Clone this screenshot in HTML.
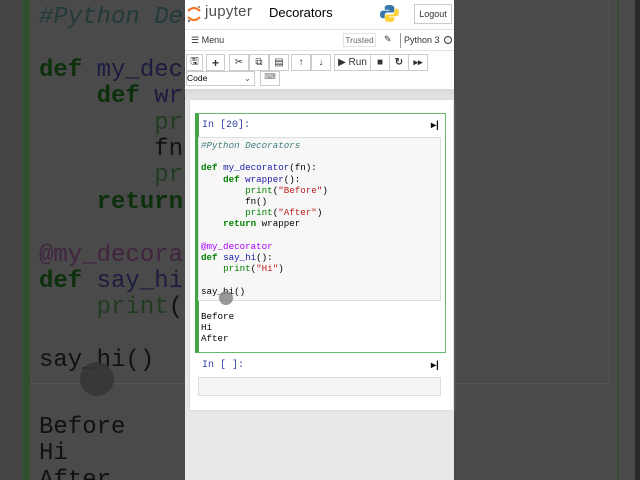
<!DOCTYPE html>
<html style="width:640px;height:480px;overflow:hidden"><head><meta charset="utf-8"><style>
*{margin:0;padding:0;box-sizing:border-box}
body{width:640px;height:480px;overflow:hidden;background:#4a4a4a;position:relative;font-family:"Liberation Sans",sans-serif}
.abs{position:absolute}
.bg{font-family:"Liberation Mono",monospace;font-size:24px;line-height:26.4px;color:#111;white-space:pre;left:39px;overflow:hidden}
.mono{font-family:"Liberation Mono",monospace;white-space:pre}
.bg .k{color:#0c300c;font-weight:bold}
.bg .f{color:#1c1c40}
.bg .c{color:#223a3a;font-style:italic}
.bg .b{color:#223c22}
.bg .d{color:#402440}
.bg .s{color:#401616}
.code{font-size:9.2px;line-height:11.2px;color:#000}
.code .k{color:#008000;font-weight:bold}
.code .f{color:#1a1aa6}
.code .c{color:#408080;font-style:italic}
.code .b{color:#008000}
.code .d{color:#a0f}
.code .s{color:#ba2121}
.btn{position:absolute;top:54px;height:17px;border:1px solid #ccc;background:#fff;font-size:10px;color:#333;display:flex;align-items:center;justify-content:center}
</style></head><body>
<div class="abs" style="left:0;top:0;width:22px;height:480px;background:#444"></div>
<div class="abs" style="left:22px;top:0;width:8px;height:480px;background:#2f4f2f"></div>
<div class="abs" style="left:30px;top:0;width:580px;height:384px;border-bottom:1px solid #555;border-right:1px solid #555"></div>
<div class="abs" style="left:617px;top:0;width:2px;height:480px;background:#3a4a3a"></div>
<div class="abs" style="left:635px;top:0;width:5px;height:480px;background:#2a2a2a"></div>
<div class="abs bg" style="top:5px;height:372px"><span class="c">#Python Decorators</span>

<span class="k">def</span> <span class="f">my_decorator</span>(fn):
    <span class="k">def</span> <span class="f">wrapper</span>():
        <span class="b">print</span>(<span class="s">"Before"</span>)
        fn()
        <span class="b">print</span>(<span class="s">"After"</span>)
    <span class="k">return</span> wrapper

<span class="d">@my_decorator</span>
<span class="k">def</span> <span class="f">say_hi</span>():
    <span class="b">print</span>(<span class="s">"Hi"</span>)

say_hi()</div>
<div class="abs bg" style="top:415px;height:65px">Before
Hi
After</div>
<div class="abs" style="left:80px;top:362px;width:34px;height:34px;border-radius:50%;background:#333;opacity:.8"></div>

<!-- center panel -->
<div class="abs" style="left:185px;top:0;width:269px;height:480px;background:#e8e8e8"></div>
<div class="abs" style="left:185px;top:0;width:269px;height:89px;background:#fff"></div>
<div class="abs" style="left:185px;top:29px;width:269px;height:1px;background:#e4e4e4"></div>
<div class="abs" style="left:185px;top:50px;width:269px;height:1px;background:#e4e4e4"></div>
<div class="abs" style="left:185px;top:89px;width:269px;height:11px;background:linear-gradient(#d8d8d8,#e6e6e6)"></div>
<div class="abs" style="left:190px;top:100px;width:263px;height:310px;background:#fff;box-shadow:0 0 3px #ccc"></div>

<!-- header -->
<svg class="abs" style="left:186px;top:4px" width="16" height="20" viewBox="0 0 16 20"><path d="M2 7 Q8 1 14 7" stroke="#f37726" stroke-width="2.2" fill="none"/><path d="M2 13 Q8 19 14 13" stroke="#f37726" stroke-width="2.2" fill="none"/><circle cx="13" cy="3" r="1" fill="#767677"/><circle cx="3" cy="17" r="1.2" fill="#767677"/></svg>
<div class="abs" style="left:205px;top:3px;font-size:15px;color:#4e4e4e;letter-spacing:.3px">jupyter</div>
<div class="abs" style="left:269px;top:5px;font-size:13px;color:#000">Decorators</div>
<svg class="abs" style="left:380px;top:4px" width="19" height="19" viewBox="0 0 20 20"><path d="M10 1C5 1 5 3 5 4v2h5v1H3C1 7 0 9 0 11s1 4 3 4h2v-3c0-2 1-3 3-3h5c2 0 2-1 2-2V4c0-2-2-3-5-3z" fill="#3776ab"/><path d="M10 19c5 0 5-2 5-3v-2h-5v-1h7c2 0 3-2 3-4s-1-4-3-4h-2v3c0 2-1 3-3 3H7c-2 0-2 1-2 2v3c0 2 2 3 5 3z" fill="#ffd43b"/></svg>
<div class="abs" style="left:414px;top:4px;width:38px;height:20px;border:1px solid #ccc;font-size:9px;display:flex;align-items:center;justify-content:center;color:#333">Logout</div>

<!-- menu -->
<div class="abs" style="left:191px;top:35px;font-size:9px;color:#333">☰ Menu</div>
<div class="abs" style="left:343px;top:33px;width:33px;height:14px;border:1px solid #e4e4e4;font-size:8.5px;color:#666;display:flex;align-items:center;justify-content:center">Trusted</div>
<div class="abs" style="left:384px;top:34px;font-size:9px;color:#333">✎</div>
<div class="abs" style="left:400px;top:33px;width:1px;height:15px;background:#999"></div>
<div class="abs" style="left:404px;top:35px;font-size:9px;color:#333">Python 3</div>
<div class="abs" style="left:444px;top:36px;width:8px;height:8px;border:1px solid #333;border-radius:50%"></div>

<!-- toolbar -->
<div class="btn" style="left:186px;width:17px">🖫</div>
<div class="btn" style="left:206px;width:19px;font-weight:bold;font-size:12px">+</div>
<div class="btn" style="left:229px;width:20px">✂</div>
<div class="btn" style="left:249px;width:20px">⧉</div>
<div class="btn" style="left:269px;width:20px">▤</div>
<div class="btn" style="left:291px;width:20px;font-weight:bold">↑</div>
<div class="btn" style="left:311px;width:20px;font-weight:bold">↓</div>
<div class="btn" style="left:334px;width:37px">▶ Run</div>
<div class="btn" style="left:370px;width:20px">■</div>
<div class="btn" style="left:389px;width:20px;font-weight:bold">↻</div>
<div class="btn" style="left:408px;width:20px;font-size:9px;font-weight:bold">▸▸</div>
<div class="abs" style="left:186px;top:71px;width:69px;height:15px;border:1px solid #ccc;font-size:8.5px;color:#000;padding:1px 0 0 0">Code<span style="position:absolute;right:3px;top:1px;color:#555">⌄</span></div>
<div class="abs" style="left:260px;top:71px;width:20px;height:15px;border:1px solid #ccc;font-size:8px;color:#777;text-align:center">⌨</div>

<!-- cell 1 -->
<div class="abs" style="left:195px;top:113px;width:251px;height:240px;border:1px solid #66bb6a;border-left:4px solid #42a548"></div>
<div class="abs mono" style="left:202px;top:120px;font-size:10px;color:#303f9f">In [20]:</div>
<div class="abs" style="left:431px;top:120px;font-size:10px;font-weight:bold;color:#111">▸|</div>
<div class="abs" style="left:198px;top:137px;width:243px;height:164px;background:#f7f7f7;border:1px solid #ddd"></div>
<div class="abs mono code" style="left:201px;top:140px"><span class="c">#Python Decorators</span>

<span class="k">def</span> <span class="f">my_decorator</span>(fn):
    <span class="k">def</span> <span class="f">wrapper</span>():
        <span class="b">print</span>(<span class="s">"Before"</span>)
        fn()
        <span class="b">print</span>(<span class="s">"After"</span>)
    <span class="k">return</span> wrapper

<span class="d">@my_decorator</span>
<span class="k">def</span> <span class="f">say_hi</span>():
    <span class="b">print</span>(<span class="s">"Hi"</span>)

say_hi()</div>
<div class="abs" style="left:219px;top:291px;width:14px;height:14px;border-radius:50%;background:#777;opacity:.75"></div>
<div class="abs mono code" style="left:201px;top:311px">Before
Hi
After</div>

<!-- cell 2 -->
<div class="abs mono" style="left:202px;top:360px;font-size:10px;color:#303f9f">In [ ]:</div>
<div class="abs" style="left:431px;top:360px;font-size:10px;font-weight:bold;color:#111">▸|</div>
<div class="abs" style="left:198px;top:377px;width:243px;height:19px;background:#f5f5f5;border:1px solid #ddd"></div>
</body></html>
